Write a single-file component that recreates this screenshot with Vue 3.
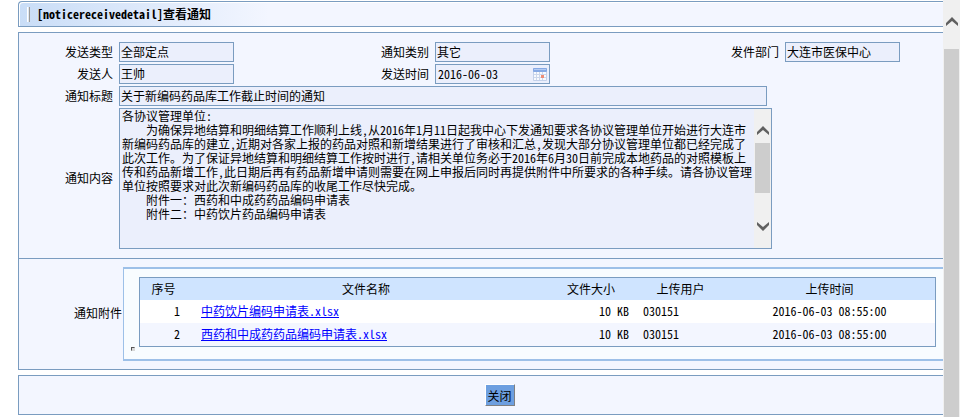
<script setup>
const notice = {
  type: '全部定点',
  category: '其它',
  department: '大连市医保中心',
  sender: '王帅',
  sendTime: '2016-06-03',
  title: '关于新编码药品库工作截止时间的通知',
  content: [
    '各协议管理单位:',
    '    为确保异地结算和明细结算工作顺利上线，从2016年1月11日起我中心下发通知要求各协议管理单位开始进行大连市',
    '新编码药品库的建立,近期对各家上报的药品对照和新增结果进行了审核和汇总,发现大部分协议管理单位都已经完成了',
    '此次工作。为了保证异地结算和明细结算工作按时进行,请相关单位务必于2016年6月30日前完成本地药品的对照模板上',
    '传和药品新增工作,此日期后再有药品新增申请则需要在网上申报后同时再提供附件中所要求的各种手续。请各协议管理',
    '单位按照要求对此次新编码药品库的收尾工作尽快完成。',
    '    附件一：西药和中成药药品编码申请表',
    '    附件二：中药饮片药品编码申请表'
  ].join('\n')
}

const files = [
  { id: 1, name: '中药饮片编码申请表.xlsx', size: '10 KB', user: '030151', time: '2016-06-03 08:55:00' },
  { id: 2, name: '西药和中成药药品编码申请表.xlsx', size: '10 KB', user: '030151', time: '2016-06-03 08:55:00' }
]
</script>

<template>
  <div class="page">
    <main class="main">
      <header class="title-bar">
        <i class="title-mark"></i>
        <h1>[noticereceivedetail]查看通知</h1>
      </header>

      <section class="panel">
        <div class="fields">
          <label for="type">发送类型</label>
          <input id="type" class="field" type="text" readonly :value="notice.type">
          <label for="category">通知类别</label>
          <input id="category" class="field" type="text" readonly :value="notice.category">
          <label for="department">发件部门</label>
          <input id="department" class="field" type="text" readonly :value="notice.department">

          <label for="sender">发送人</label>
          <input id="sender" class="field" type="text" readonly :value="notice.sender">
          <label for="sendTime">发送时间</label>
          <div class="field date-field">
            <input id="sendTime" type="text" readonly :value="notice.sendTime">
            <svg width="14" height="13" viewBox="0 0 14 13">
              <rect x="0" y="0" width="14" height="13" rx="1" fill="#c3d1ea" />
              <rect x="0" y="0" width="14" height="4" rx="1" fill="#86a9e4" />
              <rect x="1" y="1" width="12" height="1" fill="#b3cbf3" />
              <rect x="1" y="4" width="12" height="8" fill="#f8fafe" />
              <path d="M1 6.5h12M1 9.5h12M3.5 4v8M6.5 4v8M9.5 4v8" stroke="#ccd7eb" stroke-width="1" />
              <rect x="8" y="7" width="3" height="3" fill="#ee8d75" />
            </svg>
          </div>

          <label class="row-start" for="title">通知标题</label>
          <input id="title" class="field wide title-field" type="text" readonly :value="notice.title">

          <label class="row-start" for="content">通知内容</label>
          <div class="wide content-field">
            <textarea id="content" readonly :value="notice.content"></textarea>
            <div class="inner-scroll">
              <svg width="12" height="9" viewBox="0 0 12 9"><path d="M0 6L6 0L12 6V9L6 4L0 9Z" fill="#606060" /></svg>
              <div class="inner-thumb"></div>
              <svg width="12" height="9" viewBox="0 0 12 9"><path d="M0 3L6 9L12 3V0L6 5L0 0Z" fill="#606060" /></svg>
            </div>
          </div>
        </div>

        <div class="attachments">
          <span class="attach-label">通知附件</span>
          <div class="attach-box">
            <i class="corner"></i>
            <div class="table-wrap">
              <table>
                <thead>
                  <tr>
                    <th class="col-no">序号</th>
                    <th>文件名称</th>
                    <th class="col-size">文件大小</th>
                    <th class="col-user">上传用户</th>
                    <th class="col-time">上传时间</th>
                  </tr>
                </thead>
                <tbody>
                  <tr v-for="file in files" :key="file.id">
                    <td class="no">{{ file.id }}</td>
                    <td class="name"><a href="#">{{ file.name }}</a></td>
                    <td class="size">{{ file.size }}</td>
                    <td class="user">{{ file.user }}</td>
                    <td class="time">{{ file.time }}</td>
                  </tr>
                </tbody>
              </table>
            </div>
          </div>
        </div>
      </section>

      <footer class="panel footer">
        <button type="button">关闭</button>
      </footer>
    </main>

    <div class="page-scroll">
      <svg width="12" height="9" viewBox="0 0 12 9"><path d="M0 6L6 0L12 6V9L6 4L0 9Z" fill="#606060" /></svg>
      <div class="page-thumb"></div>
    </div>
  </div>
</template>

<style>
body {
  background: #fff;
  overflow: hidden;
}
</style>

<style scoped>
.page,
.page input,
.page textarea,
.page button {
  font-family: "Noto Sans CJK SC", sans-serif;
  font-size: 12px;
  font-feature-settings: "hwid";
  color: #000;
}

.page {
  display: flex;
  height: 100vh;
  line-height: 16px;
}

.page * {
  box-sizing: border-box;
}

.main {
  flex: 1;
  min-width: 0;
  padding: 1px 0 0 18px;
}

.title-bar {
  display: flex;
  align-items: center;
  gap: 7px;
  height: 26px;
  padding-left: 8px;
  border: 1px solid #7a9cc0;
  border-right: none;
  border-top-left-radius: 4px;
  background: linear-gradient(to right, #c9ddf7, #f3f6ff 250px);
  box-shadow: inset 1px 1px 0 #fff;
}

.title-mark {
  width: 3px;
  height: 15px;
  border-left: 1px solid #fff;
  border-right: 1px solid #9a9a9a;
  background: #dde6f2;
}

h1 {
  margin: 0;
  font-size: 12px;
  font-weight: 700;
}

.panel {
  margin-top: 5px;
  border: 1px solid #7a9cc0;
  border-right: none;
  background: #f3f6ff;
}

.fields {
  display: grid;
  grid-template-columns: 96px 256fr 52px 290fr 52px 158fr;
  gap: 2px 4px;
  align-items: center;
  padding: 9px 0;
}

.fields label {
  text-align: right;
  padding: 0 2px 1px 0;
  white-space: nowrap;
}

.row-start {
  grid-column: 1;
}

.wide {
  grid-column: 2 / -1;
}

.field {
  width: 115px;
  height: 20px;
  margin: 0;
  padding: 0 1px 2px;
  border: 1px solid #7a9cc0;
  border-radius: 0;
  background: #ebeffc;
  outline: none;
}

.date-field {
  display: flex;
  align-items: center;
  padding: 0 2px;
}

.date-field input {
  flex: 1;
  min-width: 0;
  padding: 0 0 2px;
  border: none;
  background: transparent;
  outline: none;
}

.title-field {
  width: 648px;
  max-width: 100%;
}

.content-field {
  display: flex;
  width: 653px;
  max-width: 100%;
  height: 141px;
  border: 1px solid #7a9cc0;
  background: #ebeffc;
}

.content-field textarea {
  flex: 1;
  min-width: 0;
  margin: 0;
  padding: 0 0 0 2px;
  border: none;
  background: transparent;
  line-height: 14px;
  white-space: pre;
  overflow: hidden;
  resize: none;
  outline: none;
}

.inner-scroll {
  display: flex;
  flex-direction: column;
  align-items: center;
  gap: 8px;
  width: 17px;
  padding: 17px 1px;
  background: #f0f0f0;
}

.inner-thumb {
  width: 100%;
  height: 50px;
  margin-bottom: 21px;
  background: #cdcdcd;
}

.attachments {
  display: flex;
  align-items: center;
  border-top: 1px solid #7a9cc0;
  padding: 8px 0;
}

.attach-label {
  width: 104px;
  padding: 0 1px 2px 0;
  text-align: right;
}

.attach-box {
  display: flex;
  flex: 1;
  align-items: flex-end;
  gap: 4px;
  min-width: 0;
  padding: 8px 7px;
  border: 2px solid #9dc0e8;
  border-left-width: 1px;
  border-right: none;
  background: #f8fcff;
}

.corner {
  width: 4px;
  height: 4px;
  border: 1px solid #d8d8d8;
  border-top-color: #555;
  border-left-color: #555;
  background: #d8d8d8;
}

.table-wrap {
  flex: 1;
  padding-bottom: 4px;
}

table {
  width: 100%;
  table-layout: fixed;
  border: 1px solid #7a9cc0;
  border-spacing: 0;
}

th,
td {
  height: 23px;
  padding: 0 0 2px;
}

th {
  height: 22px;
  padding: 0;
  background: #cfe4ff;
  font-weight: 400;
}

.col-no {
  width: 47px;
}

.col-size {
  width: 92px;
}

.col-user {
  width: 87px;
}

.col-time {
  width: 211px;
}

tbody tr {
  background: #fff;
}

tbody tr:nth-child(even) {
  background: #f3f6ff;
}

.no {
  padding-right: 7px;
  text-align: right;
}

.name {
  padding-left: 14px;
}

.name a {
  color: #0000ff;
}

.size {
  padding-right: 8px;
  text-align: right;
}

.user {
  padding-left: 6px;
}

.time {
  text-align: center;
}

.footer {
  display: flex;
  justify-content: center;
  padding: 8px 0 8px 37px;
}

.footer button {
  width: 30px;
  height: 22px;
  padding: 0;
  border: 1px solid;
  border-color: #fff #808080 #808080 #fff;
  background: #6d9fe0;
  white-space: nowrap;
}

.page-scroll {
  display: flex;
  flex-direction: column;
  align-items: center;
  gap: 23px;
  width: 17px;
  padding: 17px 1px 0;
  background: #f0f0f0;
}

.page-thumb {
  flex: 1;
  width: 100%;
  background: #cdcdcd;
}
</style>
